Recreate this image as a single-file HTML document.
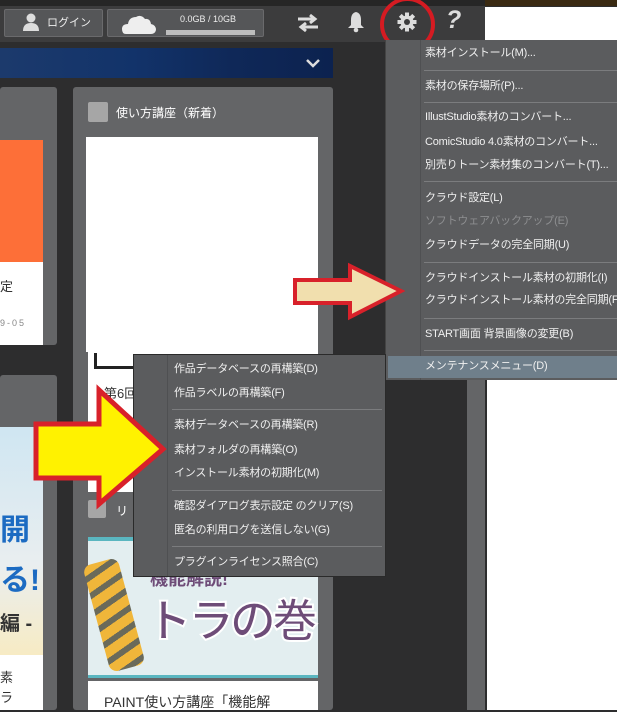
<!DOCTYPE html>
<html><head><meta charset="utf-8"><style>
*{margin:0;padding:0;box-sizing:border-box}
body{width:617px;height:710px;overflow:hidden;background:#2d2d2e;font-family:"Liberation Sans","Noto Sans CJK JP",sans-serif;position:relative;color:#fff}
.a{position:absolute}
.btn{position:absolute;top:9px;height:28px;background:#555658;border:1px solid #6a6a6c;border-radius:2px}
.mi{position:absolute;font-size:11px;letter-spacing:-0.2px;color:#f0f0f0;white-space:nowrap;line-height:14px}
.sep{position:absolute;height:1px;background:#7b7c7e}
</style></head><body>
<!-- top bar -->
<div class="a" style="left:0;top:0;width:617px;height:6px;background:#262626"></div>
<div class="a" style="left:0;top:6px;width:485px;height:36px;background:#3c3c3d"></div>
<div class="btn" style="left:4px;width:99px"></div>
<svg class="a" style="left:22px;top:12px" width="18" height="20" viewBox="0 0 18 20"><circle cx="9" cy="6" r="4.5" fill="#ddd"/><path d="M1 19 Q1 11 9 11 Q17 11 17 19Z" fill="#ddd"/></svg>
<div class="a" style="left:47px;top:14px;font-size:11px;color:#eee">ログイン</div>
<div class="btn" style="left:107px;width:157px"></div>
<svg class="a" style="left:122px;top:13px" width="34" height="22" viewBox="0 0 34 22"><path d="M4 21 Q0 21 0 16 Q0 11 6 11 Q7 4 14 4 Q19 1 23 6 Q28 5 29 11 Q34 12 34 17 Q33 21 29 21Z" fill="#eee"/></svg>
<div class="a" style="left:180px;top:14px;font-size:9px;color:#eee">0.0GB / 10GB</div>
<div class="a" style="left:166px;top:30px;width:89px;height:5px;background:#bdbdbd"></div>
<svg class="a" style="left:296px;top:13px" width="24" height="20" viewBox="0 0 24 20"><path d="M2 6H18M14 2L19 6L14 10M22 14H6M10 10L5 14L10 18" stroke="#ddd" stroke-width="3" fill="none"/></svg>
<svg class="a" style="left:347px;top:11px" width="18" height="22" viewBox="0 0 18 22"><path d="M9 1Q4 2 4 9V14L1 17H17L14 14V9Q14 2 9 1Z" fill="#ddd"/><circle cx="9" cy="19" r="2.3" fill="#ddd"/></svg>
<svg class="a" style="left:397px;top:12px" width="20" height="20" viewBox="0 0 20 20"><g fill="#ddd"><circle cx="10" cy="10" r="6.5"/><rect x="8" y="0.5" width="4" height="19"/><rect x="0.5" y="8" width="19" height="4"/><rect x="8" y="0.5" width="4" height="19" transform="rotate(45 10 10)"/><rect x="8" y="0.5" width="4" height="19" transform="rotate(-45 10 10)"/></g><circle cx="10" cy="10" r="3" fill="#3c3c3d"/></svg>
<div class="a" style="left:446px;top:6px;font-size:25px;font-weight:bold;font-style:italic;color:#ddd">?</div>
<div class="a" style="left:380px;top:-3px;width:55px;height:55px;border:4px solid #d51b22;border-radius:50%"></div>
<div class="a" style="left:485px;top:7px;width:132px;height:33px;background:#fff"></div>
<div class="a" style="left:485px;top:0;width:132px;height:6px;background:#3a2a12"></div>
<!-- banner -->
<div class="a" style="left:0;top:48px;width:333px;height:30px;background:linear-gradient(90deg,#1c3a6c,#12336a 40%,#0f2858 70%,#0c224f)"></div>
<svg class="a" style="left:305px;top:57px" width="16" height="12" viewBox="0 0 16 12"><path d="M2 3L8 9L14 3" stroke="#ddd" stroke-width="2.5" fill="none"/></svg>
<!-- left cards -->
<div class="a" style="left:0;top:87px;width:57px;height:258px;background:#646567;border-radius:3px"></div>
<div class="a" style="left:0;top:140px;width:43px;height:122px;background:#fd6f38"></div>
<div class="a" style="left:0;top:262px;width:43px;height:83px;background:#fff"></div>
<div class="a" style="left:0;top:276px;font-size:13px;color:#333">定</div>
<div class="a" style="left:0;top:318px;font-size:9px;color:#888;letter-spacing:2px">9-05</div>
<div class="a" style="left:0;top:375px;width:57px;height:335px;background:#646567;border-radius:3px"></div>
<div class="a" style="left:0;top:427px;width:43px;height:228px;background:linear-gradient(#cfe6f2,#e9eef0 60%,#f7ebc4)"></div>
<div class="a" style="left:0;top:505px;font-size:30px;font-weight:bold;color:#1c6bc2">開</div>
<div class="a" style="left:0;top:555px;font-size:30px;font-weight:bold;color:#1c6bc2">る!</div>
<div class="a" style="left:0;top:607px;font-size:20px;font-weight:bold;color:#333">編 -</div>
<div class="a" style="left:0;top:655px;width:43px;height:55px;background:#fff"></div>
<div class="a" style="left:0;top:668px;font-size:13px;color:#333;line-height:20px">素<br>ラ</div>
<!-- middle card -->
<div class="a" style="left:73px;top:87px;width:260px;height:623px;background:#646567;border-radius:3px"></div>
<div class="a" style="left:88px;top:102px;width:20px;height:20px;background:#a6a6a6;border-radius:2px"></div>
<div class="a" style="left:116px;top:104px;font-size:12px;color:#fff">使い方講座（新着）</div>
<div class="a" style="left:86px;top:137px;width:232px;height:215px;background:#fff"></div>
<div class="a" style="left:88px;top:352px;width:230px;height:140px;background:#fff"></div>
<div class="a" style="left:94px;top:353px;width:60px;height:16px;border-bottom:3px solid #222;border-left:3px solid #222"></div>
<div class="a" style="left:104px;top:383px;font-size:13px;color:#333">第6回</div>
<div class="a" style="left:88px;top:500px;width:18px;height:18px;background:#a6a6a6;border-radius:2px"></div>
<div class="a" style="left:116px;top:502px;font-size:12px;color:#fff">リ</div>
<div class="a" style="left:88px;top:537px;width:230px;height:141px;background:#e3eef0;border-top:4px solid #5ab6c0;border-bottom:3px solid #5ab6c0"></div>
<div class="a" style="left:96px;top:560px;width:36px;height:110px;background:repeating-linear-gradient(160deg,#f0b63a 0 10px,#6a6a5a 10px 16px);border-radius:8px;transform:rotate(-15deg)"></div>
<div class="a" style="left:146px;top:585px;font-size:46px;font-weight:bold;color:#6e4c78;letter-spacing:-4px;-webkit-text-stroke:2px #fff">トラの巻</div>
<div class="a" style="left:150px;top:565px;font-size:18px;font-weight:bold;color:#6e4c78">機能解説!</div>
<div class="a" style="left:88px;top:681px;width:230px;height:29px;background:#fff"></div>
<div class="a" style="left:104px;top:692px;font-size:14px;color:#333;white-space:nowrap">PAINT使い方講座「機能解</div>
<!-- right area -->
<div class="a" style="left:467px;top:380px;width:18px;height:330px;background:#646567"></div>
<div class="a" style="left:487px;top:380px;width:130px;height:330px;background:#fff"></div>
<!-- right menu -->
<div class="a" style="left:385px;top:40px;width:232px;height:340px;background:#5b5c5e;border-left:1px solid #444"></div>
<div class="a" style="left:420px;top:40px;width:1px;height:340px;background:#4f5052"></div>
<div class="a" style="left:388px;top:356px;width:229px;height:22px;background:#6f7f8b"></div>
<div class="mi" style="left:425px;top:46px">素材インストール(M)...</div>
<div class="sep" style="left:424px;top:70px;width:193px"></div>
<div class="mi" style="left:425px;top:79px">素材の保存場所(P)...</div>
<div class="sep" style="left:424px;top:102px;width:193px"></div>
<div class="mi" style="left:425px;top:110px">IllustStudio素材のコンバート...</div>
<div class="mi" style="left:425px;top:135px">ComicStudio 4.0素材のコンバート...</div>
<div class="mi" style="left:425px;top:158px">別売りトーン素材集のコンバート(T)...</div>
<div class="sep" style="left:424px;top:181px;width:193px"></div>
<div class="mi" style="left:425px;top:191px">クラウド設定(L)</div>
<div class="mi" style="left:425px;top:214px;color:#8d8e90">ソフトウェアバックアップ(E)</div>
<div class="mi" style="left:425px;top:238px">クラウドデータの完全同期(U)</div>
<div class="sep" style="left:424px;top:262px;width:193px"></div>
<div class="mi" style="left:425px;top:271px">クラウドインストール素材の初期化(I)</div>
<div class="mi" style="left:425px;top:293px">クラウドインストール素材の完全同期(F)</div>
<div class="sep" style="left:424px;top:318px;width:193px"></div>
<div class="mi" style="left:425px;top:327px">START画面 背景画像の変更(B)</div>
<div class="sep" style="left:424px;top:350px;width:193px"></div>
<div class="mi" style="left:425px;top:359px">メンテナンスメニュー(D)</div>
<!-- context menu -->
<div class="a" style="left:133px;top:354px;width:253px;height:223px;background:#5b5c5e;border:1px solid #2a2a2a"></div>
<div class="a" style="left:167px;top:355px;width:1px;height:221px;background:#4f5052"></div>
<div class="mi" style="left:174px;top:362px">作品データベースの再構築(D)</div>
<div class="mi" style="left:174px;top:386px">作品ラベルの再構築(F)</div>
<div class="sep" style="left:172px;top:409px;width:210px"></div>
<div class="mi" style="left:174px;top:418px">素材データベースの再構築(R)</div>
<div class="mi" style="left:174px;top:443px">素材フォルダの再構築(O)</div>
<div class="mi" style="left:174px;top:466px">インストール素材の初期化(M)</div>
<div class="sep" style="left:172px;top:490px;width:210px"></div>
<div class="mi" style="left:174px;top:499px">確認ダイアログ表示設定 のクリア(S)</div>
<div class="mi" style="left:174px;top:523px">匿名の利用ログを送信しない(G)</div>
<div class="sep" style="left:172px;top:546px;width:210px"></div>
<div class="mi" style="left:174px;top:555px">プラグインライセンス照合(C)</div>
<!-- arrows -->
<svg class="a" style="left:0;top:0" width="617" height="710" viewBox="0 0 617 710">
<path d="M295 280H350V266L401 291L350 317V303H295Z" fill="#f1dfae" stroke="#d8212a" stroke-width="4" stroke-linejoin="miter"/>
<path d="M36 424H99V390L163 449L99 504V478H36Z" fill="#fff200" stroke="#d8212a" stroke-width="5" stroke-linejoin="miter"/>
</svg>
</body></html>
